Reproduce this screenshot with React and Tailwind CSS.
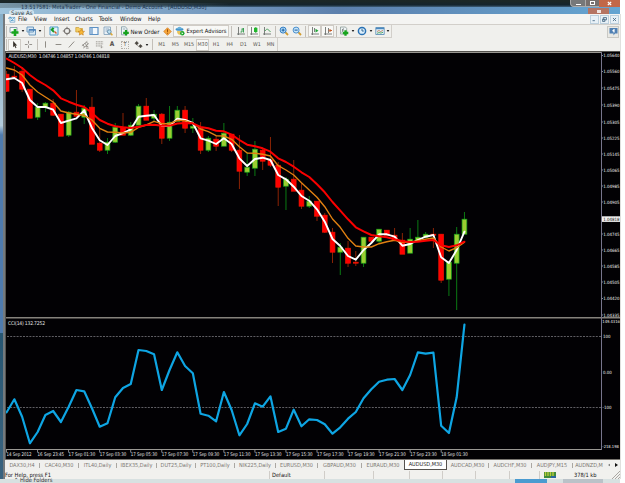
import React from 'react';
import clsx from 'clsx';

const STEP = 7.76;
const x = (i) => 6.6 + i * STEP;

// [high, body top, body bottom, low, up?]
const candles = [
  [71, 74, 91, 92, 0], [66, 76, 77, 78, 0], [67, 71, 89, 92, 0], [89, 89, 118, 118, 0],
  [103, 107, 117, 120, 1], [102, 103, 107, 112, 1], [99, 103, 115, 116, 0], [114, 114, 136, 136, 0],
  [111, 112, 135, 137, 1], [90, 112, 116, 117, 0], [105, 108, 117, 124, 1], [97, 107, 144, 144, 0],
  [129, 143, 150, 152, 0], [138, 142, 150, 154, 1], [123, 127, 142, 143, 1], [113, 127, 135, 135, 0],
  [122, 125, 135, 136, 1], [104, 106, 125, 125, 1], [98, 106, 120, 120, 0], [110, 114, 118, 122, 1],
  [113, 114, 138, 144, 0], [106, 122, 138, 141, 1], [106, 110, 121, 121, 1], [106, 110, 128, 133, 0],
  [118, 126, 128, 133, 1], [122, 128, 150, 154, 0], [136, 138, 150, 152, 1], [136, 139, 146, 151, 0],
  [123, 133, 146, 146, 1], [134, 134, 150, 152, 0], [135, 150, 171, 189, 0], [152, 167, 172, 176, 1],
  [141, 149, 168, 176, 1], [148, 150, 161, 170, 0], [137, 160, 165, 167, 0], [162, 165, 187, 206, 0],
  [177, 179, 186, 210, 1], [160, 179, 191, 191, 0], [183, 190, 206, 209, 0], [196, 201, 206, 208, 1],
  [201, 201, 216, 221, 0], [213, 215, 232, 233, 0], [228, 232, 252, 263, 0], [243, 247, 252, 275, 1],
  [241, 248, 263, 267, 0], [251, 262, 263, 266, 0], [237, 237, 263, 267, 1], [237, 237, 241, 242, 0],
  [229, 229, 241, 243, 1], [230, 230, 235, 236, 0], [228, 235, 240, 240, 0], [233, 240, 254, 254, 0],
  [228, 239, 253, 253, 1], [220, 237, 240, 241, 1], [232, 234, 237, 238, 1], [228, 234, 235, 248, 0],
  [234, 234, 280, 283, 0], [262, 262, 279, 296, 1], [227, 234, 263, 310, 1], [212, 219, 234, 234, 1],
];

const fast = [79.3, 78, 83, 100, 107, 107, 109.7, 123, 120.7, 118.3, 110.3, 128, 140.3, 145, 136, 133, 129.3, 116.7, 115.7, 115, 126, 126, 118.7, 120, 123, 138.3, 140.7, 144, 138.3, 144, 158.3, 166, 159, 157.7, 160, 175, 179.3, 186.7, 196, 200.7, 209.3, 221.7, 239, 246, 256, 259.7, 250, 243, 234.3, 234.3, 236.7, 245.7, 244, 240, 236.7, 235, 257.3, 263, 250, 231.7];
const mid = [68, 70, 75, 85, 92, 97, 102, 111, 113, 114.3, 115.3, 120, 128.3, 132, 132.3, 133, 132.3, 127.3, 125, 121.3, 123.7, 123.7, 120.3, 120.7, 123.3, 129, 131.7, 135.7, 136, 139.3, 146.7, 153, 153.3, 154.3, 156, 165.7, 170, 175, 182.7, 190, 197.3, 206.7, 219, 227.3, 238.3, 246, 247, 247, 243.7, 241.7, 240.3, 242.3, 242, 240.7, 239.3, 238, 247, 251, 247.7, 242.3];
const slow = [58.7, 63, 68, 75, 80.7, 85, 90.3, 98.3, 101.7, 104.7, 107, 113, 120, 123.7, 126.3, 127.3, 128, 126.7, 125, 124.7, 125.7, 125.7, 123.5, 123, 123.3, 127, 128.3, 130.7, 131.3, 134.7, 140, 144.7, 146.3, 148.3, 151.7, 158.3, 162, 166.7, 172.3, 177, 184.3, 192.3, 202, 210.7, 219.3, 227.3, 231.3, 235, 236.3, 237.3, 239.3, 241.3, 242, 241.7, 240.7, 240, 245.3, 247, 245.3, 241.7];
const cci = [412.3, 399.3, 416.7, 443.3, 432, 415, 411, 422, 406.7, 390, 391.3, 408.3, 426.7, 423.3, 397.3, 388, 384, 350, 351, 354.3, 390, 370, 352.3, 366, 373.3, 413.7, 415.7, 421.3, 392, 410, 435.3, 424, 403.3, 406.7, 396.3, 432, 428.7, 409.7, 426.3, 419.3, 420, 424.3, 433.7, 427.3, 418.7, 412, 398.3, 389.3, 381.7, 379.7, 379, 390, 375, 352.3, 353.7, 352.7, 425.7, 433, 397.3, 324.7];

const toPoints = (values) => values.map((v, i) => `${x(i)},${v}`).join(' ');

const prices = [
  [55.5, '1.05640'], [71.5, '1.05560'], [88, '1.05475'], [105, '1.05390'], [122, '1.05305'],
  [138, '1.05225'], [154, '1.05145'], [170, '1.05065'], [186, '1.04985'], [202, '1.04905'],
  [234, '1.04745'], [250, '1.04665'], [266, '1.04585'], [282, '1.04505'], [298.5, '1.04420'], [315, '1.04335'],
];

const times = [
  '14 Sep 2012', '16 Sep 23:45', '17 Sep 01:30', '17 Sep 03:30', '17 Sep 05:30', '17 Sep 07:30',
  '17 Sep 09:30', '17 Sep 11:30', '17 Sep 13:30', '17 Sep 15:30', '17 Sep 17:30', '17 Sep 19:30',
  '17 Sep 21:30', '17 Sep 23:30', '18 Sep 01:30',
];

function Chart() {
  return (
    <svg
      viewBox="5 51 615 408"
      className="block h-[408px] w-[615px] shrink-0 bg-[#020104] font-['DejaVu_Sans_Condensed','DejaVu_Sans',sans-serif] text-[5px]"
    >
      <rect x="5" y="51" width="615" height="1" fill="#55534f" />
      <rect x="5" y="51" width="1" height="408" fill="#55534f" />

      {/* Pane frames */}
      <g fill="none" stroke="#9a9893">
        <path d="M6 52.5H601.5" />
        <path d="M6 317.7H620" stroke="#85827c" strokeWidth="1.6" />
        <path d="M6 449.5H601.5" />
        <path d="M601.5 52V450" stroke="#77758c" />
      </g>
      <path d="M7 336.5H601M7 407.5H601" stroke="#77767c" strokeWidth="0.8" strokeDasharray="2 1.2" />

      <clipPath id="plot"><rect x="6" y="53" width="595" height="396" /></clipPath>
      <g clipPath="url(#plot)">
        {candles.map(([high, top, bottom, low, up], i) => (
          <g key={i}>
            <rect x={x(i) - 0.5} y={high} width="1" height={low - high} fill={up ? '#0b7a14' : '#8c2305'} />
            <rect
              x={x(i) - 2.4}
              y={top + 0.2}
              width="4.8"
              height={Math.max(bottom - top, 0.8)}
              fill={up ? '#9acd32' : '#ff0000'}
              stroke={up ? '#18a51b' : '#f01400'}
              strokeWidth="0.7"
            />
          </g>
        ))}
        <g fill="none" strokeLinejoin="round" strokeLinecap="round">
          <polyline points={toPoints(fast)} stroke="#fff" strokeWidth="1.9" />
          <polyline points={toPoints(mid)} stroke="#e08012" strokeWidth="1.4" />
          <polyline points={toPoints(slow)} stroke="#fa0000" strokeWidth="2" />
          <polyline points={toPoints(cci)} stroke="#0ea5e3" strokeWidth="2.2" />
        </g>
      </g>

      <g fill="#e4e4e4">
        <text x="8.5" y="58" textLength="101">AUDUSD,M30&nbsp; 1.04746 1.04857 1.04746 1.04818</text>
        <text x="8" y="325" textLength="37">CCI(14) 132.7252</text>
      </g>

      {/* Price scale */}
      <g fill="#f0f0f0" className="font-['DejaVu_Sans_Condensed','DejaVu_Sans',sans-serif] text-[4.4px]">
        {prices.map(([y, label]) => (
          <g key={label}>
            <path d={`M602 ${y}h1`} stroke="#aaa" strokeWidth="0.8" />
            <text x="603.2" y={y + 1.7}>{label}</text>
          </g>
        ))}
        <text x="602.3" y="323.2" className="text-[4.1px]">149.4316</text>
        <text x="603" y="338.2">100</text>
        <text x="603" y="373.8">0.00</text>
        <text x="602.5" y="409.2">-100</text>
        <text x="602.3" y="447.8" className="text-[4.1px]">-218.198</text>
        <rect x="602" y="216.3" width="18" height="5.6" fill="#f2f2f2" />
        <text x="603.2" y="220.8" fill="#111">1.04818</text>
      </g>

      {/* Time scale */}
      <g fill="#e4e4e4">
        {times.map((label, i) => (
          <g key={label}>
            <path d={`M${6.5 + i * 31.05} 450v2.5`} stroke="#aaa" strokeWidth="0.8" />
            <text x={6.5 + i * 31.05} y="456.3" textLength={i === 0 ? 25 : 26.6} lengthAdjust="spacingAndGlyphs">
              {label}
            </text>
          </g>
        ))}
      </g>
    </svg>
  );
}

const icons = {
  newChart: (
    <>
      <path d="M1 1.5h7v5H1z" fill="#f4f8fb" stroke="#8aa0ad" />
      <path d="M6 3v7M2.5 6.5h7" stroke="#18a51e" strokeWidth="2.6" />
    </>
  ),
  profiles: (
    <>
      <path d="M1 1h6.5v5H1zM3 3.5h6.5v5.5H3z" fill="#d9e9f4" stroke="#6f9abf" />
      <path d="M3 4h6.5" stroke="#3f7cb8" strokeWidth="1.4" />
    </>
  ),
  market: (
    <>
      <path d="M1 1h8v8H1z" fill="#e3f3fa" stroke="#4e9cc9" />
      <path d="M2 3l3 3M3 2l2 1" stroke="#179b28" strokeWidth="1.8" />
      <path d="M5.5 5.5l2 2" stroke="#d45b28" strokeWidth="1.5" />
    </>
  ),
  target: <path d="M5 .8v2.4M5 6.8v2.4M.8 5h2.4M6.8 5h2.4M5 2.3a2.7 2.7 0 1 0 0 5.4 2.7 2.7 0 0 0 0-5.4z" fill="none" stroke="#77736f" strokeWidth="1.1" />,
  folder: (
    <>
      <path d="M.8 1.5h3l1 1h2.7v3.5H.8z" fill="#f4ce64" stroke="#c99b31" strokeWidth=".7" />
      <path d="M6.3 3.2l1 2 2.2.2-1.6 1.5.4 2.2-2-1.1-2 1.1.4-2.2L3 5.4l2.3-.2z" fill="#f7b838" stroke="#c47b18" strokeWidth=".6" />
    </>
  ),
  panel: <path d="M1 1.5h8v7H1zM3 2v6" fill="#f3f8fc" stroke="#5d91c4" strokeWidth="1.2" />,
  tester: (
    <>
      <path d="M1 1h6.5v7.5H1zM2.5 3h3.5M2.5 5h3" fill="#e9f0f5" stroke="#7b9db9" strokeWidth=".8" />
      <circle cx="6.3" cy="5.7" r="1.9" fill="#bde0f2" stroke="#55809f" strokeWidth=".8" />
      <path d="M7.6 7.2l1.8 2" stroke="#dba733" strokeWidth="1.5" />
    </>
  ),
  order: (
    <>
      <path d="M1.5.8h4l1.5 2v6H1.5zM2.8 3h2.5" fill="#f1f6f8" stroke="#7c97a1" strokeWidth=".8" />
      <path d="M6 4v5.6M3.2 6.8h5.6" stroke="#17a21e" strokeWidth="2.2" />
    </>
  ),
  diamond: (
    <>
      <path d="M5 .8L9.2 5 5 9.2.8 5z" fill="#f7a63b" stroke="#d2791a" strokeWidth=".8" />
      <path d="M5 2.6v2.8M5 6.4v1" stroke="#8a4300" />
    </>
  ),
  expert: (
    <>
      <ellipse cx="4.5" cy="3.4" rx="4" ry="1.4" fill="#3d91c8" />
      <path d="M2.2 3.2C2.2 0 6.8 0 6.8 3.2z" fill="#69b1dc" />
      <path d="M2 5c0 5 5 5 5 0z" fill="#e8c45d" />
      <circle cx="7.3" cy="7.3" r="2.2" fill="#1ba72b" />
      <path d="M6.7 6.2v2.2l1.7-1.1z" fill="#fff" />
    </>
  ),
  bars: (
    <>
      <path d="M2.5 1v8M1 8h8" stroke="#6e7370" strokeWidth=".9" fill="none" />
      <path d="M4.5 6H6V2.5M7.5 2v4.5M6 3h1.5" stroke="#2c9948" strokeWidth=".9" fill="none" />
    </>
  ),
  candles: (
    <>
      <path d="M2.5 1v8M1 8h8" stroke="#6e7370" strokeWidth=".9" fill="none" />
      <path d="M6.8 1v6" stroke="#168c22" strokeWidth=".8" />
      <path d="M5 1.8h3.4v4.2H5z" fill="#20b62b" />
    </>
  ),
  line: (
    <>
      <path d="M2.5 1v8M1 8h8" stroke="#6e7370" strokeWidth=".9" fill="none" />
      <path d="M3 5c2-3 3-2 5.5 1" stroke="#3c9a4f" fill="none" strokeWidth=".9" />
    </>
  ),
  zoomIn: (
    <>
      <path d="M6.2 6.2l2.8 2.8" stroke="#d29c2f" strokeWidth="1.8" />
      <circle cx="4.1" cy="4.1" r="3" fill="#b7def8" stroke="#327dc4" />
      <path d="M4.1 2.5v3.2M2.5 4.1h3.2" stroke="#155b9f" />
    </>
  ),
  zoomOut: (
    <>
      <path d="M6.2 6.2l2.8 2.8" stroke="#d29c2f" strokeWidth="1.8" />
      <circle cx="4.1" cy="4.1" r="3" fill="#c7e5f8" stroke="#4a8fce" />
      <path d="M2.5 4.1h3.2" stroke="#155b9f" />
    </>
  ),
  scroll: (
    <>
      <path d="M2.5 1v8M1 8h8M4.5 2v4" stroke="#6e7370" strokeWidth=".9" fill="none" />
      <path d="M5.5 2.8v3.8l3-1.9z" fill="#1fa436" />
    </>
  ),
  shift: (
    <>
      <path d="M2.5 1v8M1 8h8M5.5 2v5" stroke="#6e7370" strokeWidth=".9" fill="none" />
      <path d="M9 4.5H6.5M7.5 3L6 4.5 7.5 6" stroke="#c65b27" fill="none" />
    </>
  ),
  indicators: (
    <>
      <path d="M1.5 1h5l1.2 1.5V8H1.5z" fill="#eef4f5" stroke="#8a9997" strokeWidth=".8" />
      <path d="M4.7 2.5c-2 0-.6 4-2 4M3 4h2" stroke="#6b706f" fill="none" strokeWidth=".8" />
      <path d="M6.5 4.2v5.5M3.8 7h5.5" stroke="#18a51e" strokeWidth="2.3" />
    </>
  ),
  clock: (
    <>
      <circle cx="5" cy="5" r="3.6" fill="#dceefa" stroke="#2a72b5" strokeWidth="1.5" />
      <path d="M5 2.8V5h1.8" fill="none" stroke="#235b8d" strokeWidth=".9" />
    </>
  ),
  template: (
    <>
      <path d="M.8 1.5h8.4v7H.8z" fill="#e8f3fa" stroke="#6e9abd" />
      <path d="M1 2.5h8" stroke="#4a88c0" strokeWidth="1.5" />
      <path d="M2 5.5l2-1 1.5 1L8 4.5" fill="none" stroke="#b37048" strokeWidth=".8" />
      <path d="M2 7.3l2-.7 2 .5 2-.8" fill="none" stroke="#319346" strokeWidth=".8" />
    </>
  ),
  cursor: <path d="M3.5 1v7l1.5-1.4 1.2 2.5 1-.5L6 6.2h2z" fill="#38332d" />,
  cross: <path d="M5 1v3M5 6v3M1 5h3M6 5h3" stroke="#8c8984" />,
  vline: <path d="M5 1.5v7" stroke="#85817b" />,
  hline: <path d="M1.8 5h6.4" stroke="#85817b" />,
  trend: <path d="M2 8.3l6-6.6" stroke="#85817b" />,
  channel: <path d="M1 6.5l6-5M2.5 9l6-5M2 5l2 3M4.3 3.4l2.2 3M6 2l2 2.5M5.5 9h3M5.5 7.2H8" stroke="#7c7872" strokeWidth=".8" />,
  fibo: <path d="M1 2h8M1 4.3h8M1 6.6h6M7 6v3.5M7 7.8h2" stroke="#8a867f" strokeWidth=".9" strokeDasharray="1.3 .5" />,
  arrows: <path d="M1 3.5l2-2 2 2-2 2zM5.2 6.8l2-1.8 2 1.8-2 2zM3 5l2 2.3" fill="#4b4741" stroke="#4b4741" strokeWidth=".5" />,
  meta: (
    <>
      <path d="M2.5 3h6v6h-6z" fill="#edf7fc" stroke="#5d9bc5" strokeWidth=".8" />
      <path d="M1 5c0-3 2-3 3-1s2 2 4-1M3.5 7.5l1.5-1 2 .5" fill="none" stroke="#3186bd" />
    </>
  ),
};

function Icon({ name, size = 'size-[10px]' }) {
  return <svg viewBox="0 0 10 10" className={clsx('shrink-0', size)}>{icons[name]}</svg>;
}

function Caret() {
  return <svg viewBox="0 0 4 3" className="h-[2px] w-[4px] shrink-0"><path d="M0 0h4L2 3z" fill="#222" /></svg>;
}

function Cell({ w, pressed, children, className }) {
  return (
    <div
      className={clsx(
        'flex h-[12px] shrink-0 items-center justify-center whitespace-nowrap',
        w,
        pressed && 'border border-[#d0ccc6] bg-[#f8f8f6]',
        className,
      )}
    >
      {children}
    </div>
  );
}

function Sep({ w = 'w-[4px]' }) {
  return (
    <div className={clsx('flex h-[11px] shrink-0 justify-center', w)}>
      <div className="w-px bg-[#c3bfb9]" />
    </div>
  );
}

const menu = [
  ['File', 'w-[16px]'], ['View', 'w-[20px]'], ['Insert', 'w-[21px]'], ['Charts', 'w-[24px]'],
  ['Tools', 'w-[21px]'], ['Window', 'w-[28px]'], ['Help', 'w-[20px]'],
];

const periods = ['M1', 'M5', 'M15', 'M30', 'H1', 'H4', 'D1', 'W1', 'MN'];

const tabs = [
  ['DAX30,H4', 'w-[35px]'], ['CAC40,M30', 'w-[39px]'], ['ITL40,Daily', 'w-[38px]'], ['IBEX35,Daily', 'w-[40px]'],
  ['DUT25,Daily', 'w-[39px]'], ['PT100,Daily', 'w-[39px]'], ['NIK225,Daily', 'w-[41px]'], ['EURUSD,M30', 'w-[42px]'],
  ['GBPAUD,M30', 'w-[44px]'], ['EURAUD,M30', 'w-[42px]'], ['AUDUSD,M30', 'w-[43px]'], ['AUDCAD,M30', 'w-[42px]'],
  ['AUDCHF,M30', 'w-[43px]'], ['AUDJPY,M15', 'w-[41px]'], ['AUDNZD,M', 'w-[32px]'],
];

function TitleBar() {
  return (
    <div className="relative h-[14px] w-[620px] shrink-0 bg-linear-to-b from-[#1b2727] from-10% via-[#14242d] via-35% to-[#638fb9] to-60%">
      <div className="absolute inset-x-0 top-[7px] h-[7px] bg-linear-to-r from-[#9fc4dc] via-[#5c80ad] via-55% to-[#65a5d2]" />
      <div className="absolute top-[3px] left-0 h-[5px] w-[230px] bg-linear-to-r from-[#7997a8] to-[#26404f00]" />
      <span className="absolute top-[4px] left-[21px] text-[5.7px] leading-[7px] whitespace-nowrap text-[#1b3450]">
        13.517581: MetaTrader - One Financial - Demo Account - [AUDUSD,M30]
      </span>
      <span className="absolute top-[10px] left-[9px] z-10 rounded-sm bg-[#d2e4ee] px-[2px] text-[6px] leading-[5px] text-[#303a42]">
        Save As
      </span>
      <div className="absolute top-0 right-0 flex h-[7px] text-white">
        <div className="flex w-[16px] items-end justify-center rounded-bl-sm border border-t-0 border-[#aaa] bg-[#777879]"><i className="mb-px h-[1.5px] w-[5px] bg-white" /></div>
        <div className="flex w-[13px] items-center justify-center border-b border-[#aaa] bg-[#77706e]"><i className="h-[4px] w-[5px] border border-white" /></div>
        <div className="flex w-[21px] items-center justify-center bg-[#c26748]">
          <svg viewBox="0 0 6 6" className="size-[5px]"><path d="M1 1l4 4M5 1L1 5" stroke="#fff" strokeWidth="1.5" /></svg>
        </div>
      </div>
      <div className="absolute top-[8px] right-[11px] flex h-[6px] w-[21px] items-center justify-center bg-[#b57462]">
        <i className="h-[3px] w-[4px] bg-[#efe4e0]" />
      </div>
    </div>
  );
}

function MenuBar() {
  return (
    <div className="flex h-[11px] shrink-0 items-center border-b border-[#d2cfca] bg-[#f4f4f2] text-[6.1px] text-[#111]">
      <Cell w="w-[13px]"><Icon name="meta" size="size-[8px]" /></Cell>
      {menu.map(([label, w]) => <span key={label} className={w}>{label}</span>)}
      <div className="ml-auto flex gap-px pr-px">
        {['M2 6h3', 'M3 2h4v3H3zM2 4h3v3H2z', 'M2.5 2.5l4 4M6.5 2.5l-4 4'].map((d) => (
          <div key={d} className="border border-[#bdd0dd] bg-[#e8f1f7]">
            <svg viewBox="0 0 9 9" className="h-[7px] w-[7px]"><path d={d} fill="none" stroke="#496b85" strokeWidth="1.1" /></svg>
          </div>
        ))}
      </div>
    </div>
  );
}

function MainToolbar() {
  return (
    <div className="flex h-[13px] shrink-0 items-center bg-[#f0f0ed] text-[6px] text-[#111]">
      <div className="flex h-full shrink-0 items-center border-r border-b border-[#d2cfca]">
        <Sep w="w-[3px]" />
        <Cell w="w-[12px]"><Icon name="newChart" /></Cell>
        <Cell w="w-[5px]"><Caret /></Cell>
        <Cell w="w-[12px]"><Icon name="profiles" /></Cell>
        <Cell w="w-[5px]"><Caret /></Cell>
        <Sep w="w-[5px]" />
        <Cell w="w-[13px]"><Icon name="market" /></Cell>
        <Cell w="w-[13px]"><Icon name="target" /></Cell>
        <Cell w="w-[14px]"><Icon name="folder" /></Cell>
        <Cell w="w-[14px]"><Icon name="panel" /></Cell>
        <Cell w="w-[13px]"><Icon name="tester" /></Cell>
        <Sep w="w-[4px]" />
        <Cell w="w-[43px]" className="gap-[1px]"><Icon name="order" />New Order</Cell>
        <Cell w="w-[12px]"><Icon name="diamond" size="size-[9px]" /></Cell>
        <Cell w="w-[56px]" pressed className="gap-px text-[5.7px]"><Icon name="expert" />Expert Advisors</Cell>
        <Sep w="w-[5px]" />
        <Cell w="w-[13px]"><Icon name="bars" /></Cell>
        <Cell w="w-[13px]" pressed><Icon name="candles" /></Cell>
        <Cell w="w-[13px]"><Icon name="line" /></Cell>
        <Sep w="w-[4px]" />
        <Cell w="w-[13px]"><Icon name="zoomIn" /></Cell>
        <Cell w="w-[13px]"><Icon name="zoomOut" /></Cell>
        <Sep w="w-[5px]" />
        <Cell w="w-[13px]" pressed><Icon name="scroll" /></Cell>
        <Cell w="w-[13px]" pressed><Icon name="shift" /></Cell>
        <Sep w="w-[5px]" />
        <Cell w="w-[10px]"><Icon name="indicators" /></Cell>
        <Cell w="w-[7px]"><Caret /></Cell>
        <Cell w="w-[11px]"><Icon name="clock" /></Cell>
        <Cell w="w-[7px]"><Caret /></Cell>
        <Cell w="w-[11px]"><Icon name="template" /></Cell>
        <Cell w="w-[6px]"><Caret /></Cell>
      </div>
      <div className="mr-px ml-auto flex size-[12px] items-center justify-center border border-[#c9c9c4] bg-[#e9e9e4]">
        <svg viewBox="0 0 9 9" className="size-[9px]">
          <path d="M.5 1h8v5.5H6L4.5 8.5v-2h-4z" fill="#4f80b3" />
          <path d="M5 2v3.5M5 3L3.5 4" stroke="#fff" strokeWidth="1.2" />
        </svg>
      </div>
    </div>
  );
}

function LineToolbar() {
  return (
    <div className="flex h-[13px] shrink-0 items-center bg-[#f0f0ed] text-[5.3px] text-[#55514c]">
      <div className="flex h-full shrink-0 items-center border-r border-[#d2cfca]">
        <Sep w="w-[3px]" />
        <Cell w="w-[13px]" pressed><Icon name="cursor" size="size-[9px]" /></Cell>
        <Cell w="w-[14px]"><Icon name="cross" size="size-[9px]" /></Cell>
        <Sep w="w-[4px]" />
        <Cell w="w-[12px]"><Icon name="vline" size="size-[9px]" /></Cell>
        <Cell w="w-[14px]"><Icon name="hline" size="size-[9px]" /></Cell>
        <Cell w="w-[13px]"><Icon name="trend" size="size-[9px]" /></Cell>
        <Cell w="w-[14px]"><Icon name="channel" size="size-[9px]" /></Cell>
        <Cell w="w-[14px]"><Icon name="fibo" size="size-[9px]" /></Cell>
        <Cell w="w-[12px]" className="text-[6.5px] font-bold">A</Cell>
        <Cell w="w-[14px]">
          <div className="flex size-[8px] items-center justify-center border border-dotted border-[#b3afa9] text-[5.5px] leading-none">T</div>
        </Cell>
        <Cell w="w-[12px]"><Icon name="arrows" size="size-[9px]" /></Cell>
        <Cell w="w-[5px]"><Caret /></Cell>
        <Sep w="w-[6px]" />
        {periods.map((p) => <Cell key={p} w="w-[13.6px]" pressed={p === 'M30'}>{p}</Cell>)}
      </div>
    </div>
  );
}

function ChartTabs() {
  return (
    <div className="flex h-[11px] shrink-0 border-t border-[#77746f] bg-[#f0f0ee] text-[5.5px] text-[#7b7772]">
      {tabs.map(([label, w]) => {
        const active = label === 'AUDUSD,M30';
        return (
          <div
            key={label}
            className={clsx(
              'flex shrink-0 items-center justify-center whitespace-nowrap',
              w,
              active && 'border-x border-b border-[#55524e] bg-white text-[#1c1c1c]',
            )}
          >
            <span className="flex-1 text-center">{label}</span>
            {!active && label !== 'EURAUD,M30' && label !== 'AUDNZD,M' && <i className="h-[5px] w-px bg-[#aaa7a2]" />}
          </div>
        );
      })}
      <div className="flex flex-1 items-center justify-around">
        <svg viewBox="0 0 3 4" className="h-[4px] w-[2px]"><path d="M3 0v4L0 2z" fill="#777" /></svg>
        <svg viewBox="0 0 3 4" className="h-[4px] w-[3px]"><path d="M0 0v4l3-2z" fill="#111" /></svg>
      </div>
    </div>
  );
}

const statusCells = ['w-[49px]', 'w-[36px]', 'w-[33px]', 'w-[33px]', 'w-[34px]', 'w-[30px]'];

function StatusBar() {
  return (
    <div className="flex h-[9px] shrink-0 items-center bg-[#f1f1ee] text-[5.7px] leading-[8px] whitespace-nowrap text-[#111]">
      <span className="w-[264px] shrink-0">For Help, press F1</span>
      <div className="flex h-[8px] w-[56px] shrink-0 items-center border-x border-[#d0cdc8] pl-[2px]">Default</div>
      {statusCells.map((w, i) => <div key={i} className={clsx('h-[8px] shrink-0 border-r border-[#d0cdc8]', w)} />)}
      <svg viewBox="0 0 12 6" className="ml-[4px] h-[6px] w-[12px] shrink-0">
        <path d="M0 0h12v6H0z" fill="#3f8b3c" />
        <path d="M1.5 0v4M4 0v4M6.5 0v4M9 0v4" stroke="#b9cb3b" strokeWidth="1.4" />
        <path d="M7 4h5v2H7z" fill="#2a65a0" />
      </svg>
      <span className="ml-[18px]">378/1 kb</span>
      <svg viewBox="0 0 8 8" className="ml-auto size-[8px]"><path d="M0 8l8-8M3 8l5-5M6 8l2-2" stroke="#aaa7a2" /></svg>
    </div>
  );
}

export default function App() {
  return (
    <div className="flex h-[483px] w-[625px] flex-col overflow-hidden bg-white font-['DejaVu_Sans_Condensed','DejaVu_Sans',sans-serif]">
      <TitleBar />
      <div className="flex h-[465px] shrink-0">
        <div className="w-[5px] shrink-0 border-r-2 border-[#747a7e] bg-linear-to-b from-[#86afc9] via-[#b4cbdc] via-24% to-[#4f7bae] to-26%">
          <div className="mt-[319px] h-[146px] bg-linear-to-b from-[#265571] to-[#3b6480]" />
        </div>
        <div className="flex w-[615px] shrink-0 flex-col">
          <MenuBar />
          <MainToolbar />
          <LineToolbar />
          <Chart />
          <ChartTabs />
          <StatusBar />
        </div>
        <div className="w-px bg-[#e0e0de]" />
      </div>
      <div className="flex h-[4px] w-[620px] bg-[#d8e1e1] pl-[14px] text-[5.8px] leading-[3px] text-[#333]">
        <span className="w-[501px]">⌃ Hide Folders</span>
        <div className="w-[32px] bg-[#4a9bd0]" />
        <div className="ml-[16px] w-[40px] bg-[#bac2c8]" />
      </div>
    </div>
  );
}
